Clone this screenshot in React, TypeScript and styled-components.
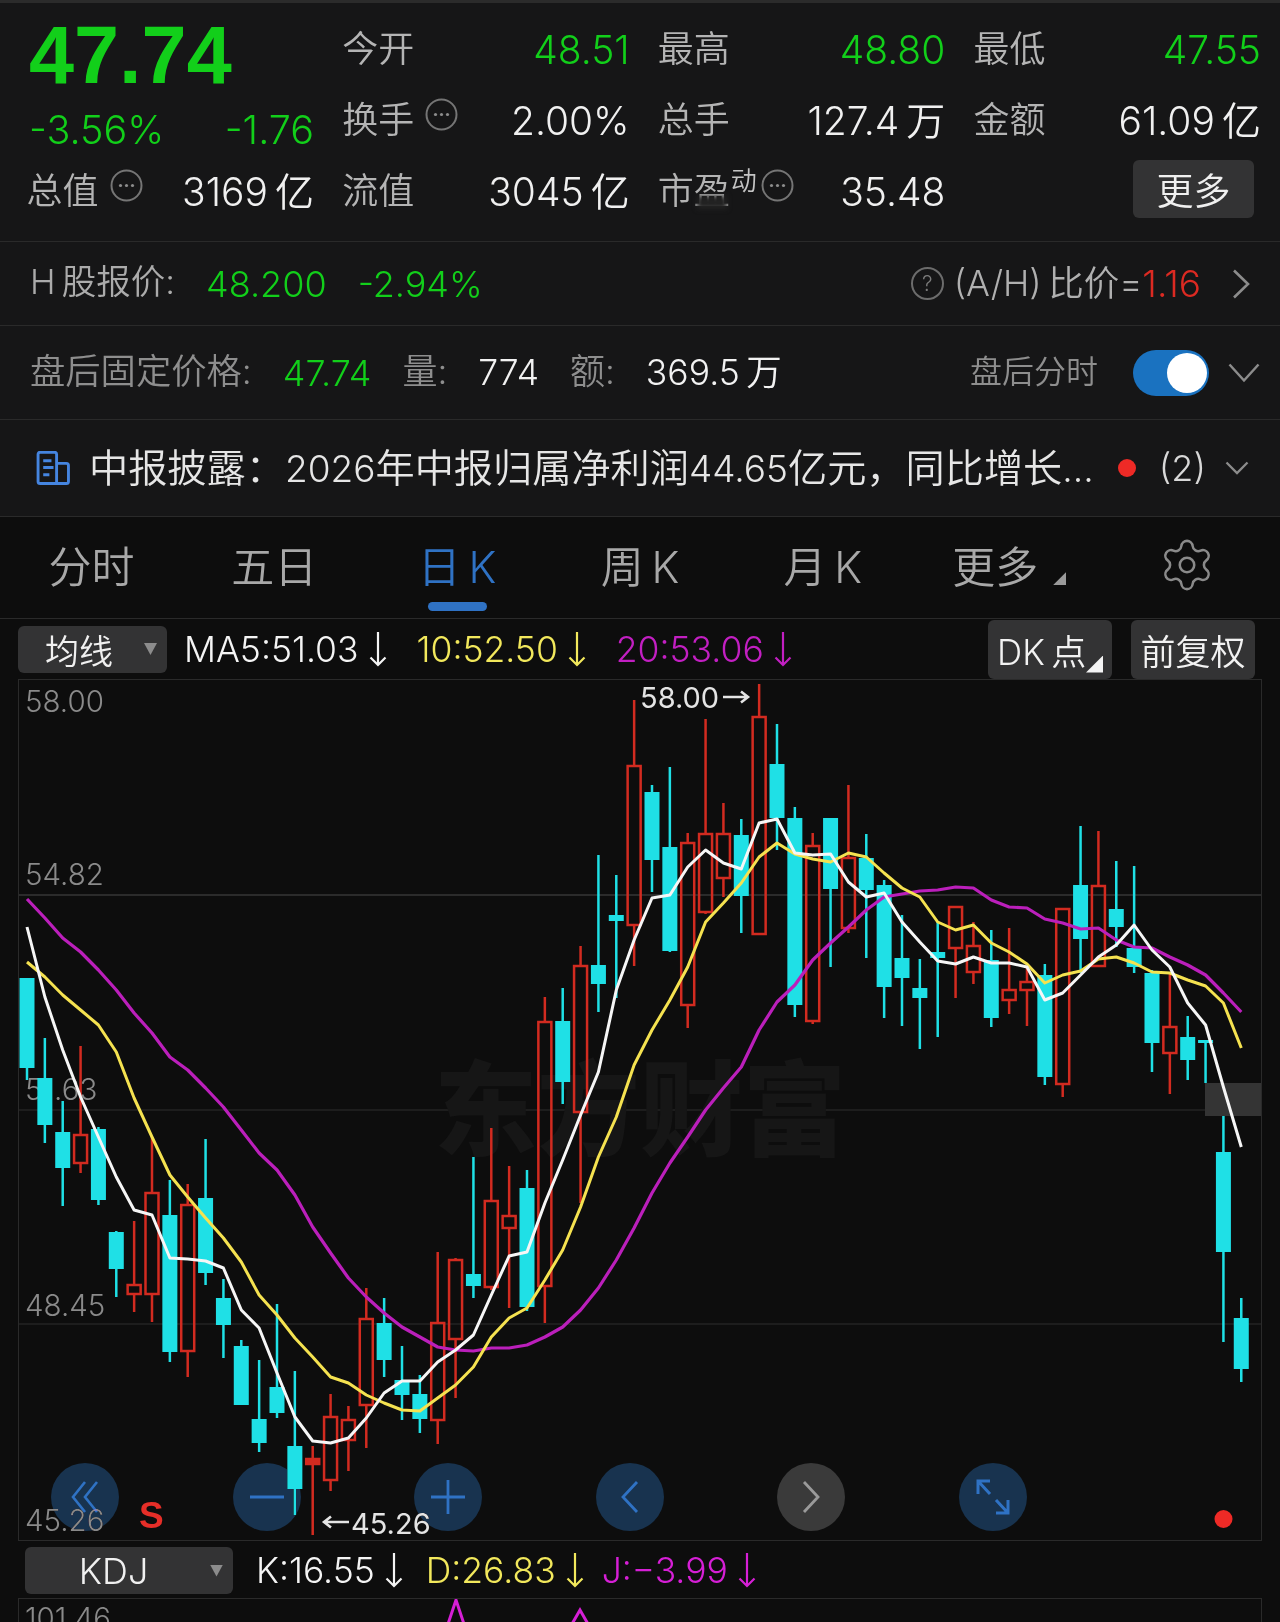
import React from "react";
import styled, { createGlobalStyle } from "styled-components";
import { Settings } from "lucide-react";

const GlobalStyle = createGlobalStyle`
  html, body { margin: 0; padding: 0; background: #0d0d0d; }
  body { font-family: Inter, "Noto Sans CJK SC", sans-serif; font-weight: 350; }
`;

const GREEN = "#12cf1a";
const BLUE = "#2f72c4";

const Page = styled.div`
  width: 1280px;
  height: 1622px;
  overflow: hidden;
  background: #0d0d0d;
  color: #eee;
`;

const Stats = styled.section`
  display: grid;
  grid-template-columns: repeat(4, 285px);
  column-gap: 30.67px;
  grid-auto-rows: 71px;
  padding: 12.5px 0 12.5px 29px;
  border-top: 3px solid #2b2b2b;
  background: #161617;
`;

const Stat = styled.div`
  display: flex;
  align-items: center;
  justify-content: space-between;
  white-space: nowrap;
  position: relative;
`;

const Price = styled.div`
  font-family: "Liberation Sans", sans-serif;
  font-size: 81px;
  font-weight: 700;
  line-height: 71px;
  color: ${GREEN};
  padding-top: 8px;
`;

const ChangeStat = styled(Stat)`
  padding-top: 22px;
`;

const LabelWrap = styled.span`
  display: flex;
  align-items: center;
`;

const StatLabel = styled.span`
  font-size: 36px;
  line-height: 1;
  margin: 0 0 4px -2.5px;
  color: #b4b4b4;
`;

const StatValue = styled.span<{ $c?: string; $size?: number }>`
  font-size: ${(p) => p.$size ?? 39}px;
  line-height: 1;
  margin-bottom: 4px;
  color: ${(p) => p.$c || "#f0f0f0"};
`;

const Sup = styled.sup`
  font-size: 26px;
  color: #c4c4c4;
  line-height: 1;
  margin: -24px 0 0 1px;
  vertical-align: baseline;
`;

const Smudge = styled.span`
  position: absolute;
  left: 37px;
  top: 38px;
  width: 30px;
  height: 13px;
  background: #222;
  filter: blur(2.5px);
`;

const InfoIconSvg = styled.svg`
  width: 33px;
  height: 33px;
  margin: -15px 0 0 ${(p: { $ml?: number }) => p.$ml ?? 11}px;
  flex: none;
`;

const InfoDots = ({ ml }: { ml?: number }) => (
  <InfoIconSvg $ml={ml} viewBox="0 0 33 33">
    <circle cx="16.5" cy="16.5" r="15" fill="none" stroke="#757575" strokeWidth="2" />
    <circle cx="10.5" cy="16.5" r="1.6" fill="#8c8c8c" />
    <circle cx="16.5" cy="16.5" r="1.6" fill="#8c8c8c" />
    <circle cx="22.5" cy="16.5" r="1.6" fill="#8c8c8c" />
  </InfoIconSvg>
);

const MoreButton = styled.button`
  width: 121px;
  height: 58px;
  margin: 0 7px 9px 0;
  border: 0;
  border-radius: 6px;
  background: #333334;
  color: #f0f0f0;
  font: inherit;
  font-size: 37px;
  line-height: 1;
  padding: 5px 0 0;
`;

const Row = styled.div<{ $h: number; $gap?: number; $pl?: number }>`
  height: ${(p) => p.$h}px;
  box-sizing: border-box;
  display: flex;
  align-items: center;
  gap: ${(p) => p.$gap ?? 33}px;
  padding: 0 20px 0 ${(p) => p.$pl ?? 32}px;
  border-top: 1px solid #2a2a2a;
  background: #161617;
  white-space: nowrap;
`;

const Muted = styled.span<{ $size: number; $c?: string }>`
  font-size: ${(p) => p.$size}px;
  line-height: 1;
  margin-bottom: 2px;
  color: ${(p) => p.$c || "#8e8e8e"};
`;

const Num = styled.span<{ $size?: number; $c?: string }>`
  font-size: ${(p) => p.$size ?? 36}px;
  line-height: 1;
  color: ${(p) => p.$c || "#f2f2f2"};
`;

const RightGroup = styled.div<{ $gap: number }>`
  margin-left: auto;
  display: flex;
  align-items: center;
  gap: ${(p) => p.$gap}px;
`;

const Question = styled.span`
  width: 33px;
  height: 33px;
  box-sizing: border-box;
  border: 2px solid #6c6c6c;
  border-radius: 50%;
  display: inline-flex;
  align-items: center;
  justify-content: center;
  font-size: 21px;
  color: #7c7c7c;
`;

const Ratio = styled.span`
  font-size: 35.5px;
  line-height: 1;
  color: #b0b0b0;
  display: inline-flex;
  align-items: center;
`;

const LineIcon = styled.svg<{ $w: number; $h: number; $c?: string; $sw?: number }>`
  width: ${(p) => p.$w}px;
  height: ${(p) => p.$h}px;
  flex: none;
  fill: none;
  stroke: ${(p) => p.$c || "#8c8c8c"};
  stroke-width: ${(p) => p.$sw ?? 2.5};
`;

const RatioChevron = styled(LineIcon)`
  margin: 0 10px 0 21px;
`;

const Toggle = styled.div`
  width: 76px;
  height: 46px;
  box-sizing: border-box;
  padding: 3px 2px;
  border-radius: 23px;
  background: #1a72c0;
  display: flex;
  justify-content: flex-end;
`;

const Thumb = styled.span`
  width: 40px;
  height: 40px;
  border-radius: 50%;
  background: #fff;
`;

const NewsRow = styled(Row)`
  gap: 0;
  padding: 0 31px 0 36px;
`;

const NewsText = styled.span`
  margin-left: 19px;
  font-size: 39.2px;
  line-height: 1;
  color: #e6e6e6;
`;

const NewsNum = styled.span`
  font-size: 37px;
`;

const Dot = styled.span`
  width: 18px;
  height: 18px;
  border-radius: 50%;
  background: #ee2a26;
  display: block;
`;

const Count = styled.span`
  font-size: 36px;
  line-height: 1;
  color: #d8d8d8;
  margin: 0 19px 0 23px;
`;

const Tabs = styled.nav`
  height: 103px;
  box-sizing: border-box;
  display: grid;
  grid-template-columns: repeat(7, 1fr);
  align-items: center;
  border-top: 1px solid #2a2a2a;
  border-bottom: 1px solid #2a2a2a;
  background: #0d0d0d;
`;

const Tab = styled.div<{ $active?: boolean }>`
  position: relative;
  height: 100%;
  box-sizing: border-box;
  padding-bottom: 8px;
  display: flex;
  align-items: center;
  justify-content: center;
  font-size: 43px;
  color: ${(p) => (p.$active ? BLUE : "#a8a8a8")};
  ${(p) =>
    p.$active &&
    `&::after {
      content: "";
      position: absolute;
      left: 62px;
      right: 62px;
      bottom: 7px;
      height: 9px;
      border-radius: 5px;
      background: ${BLUE};
    }`}
`;

const Corner = styled.span<{ $s: number; $c: string }>`
  display: inline-block;
  width: ${(p) => p.$s}px;
  height: ${(p) => p.$s}px;
  background: ${(p) => p.$c};
  clip-path: polygon(100% 0, 100% 100%, 0 100%);
`;

const MoreTab = styled(Tab)`
  padding-left: 7px;
`;

const MoreCorner = styled(Corner)`
  margin: 30px 0 0 15px;
`;

const GearTab = styled(Tab)`
  padding: 0 4px 6px 0;
`;

const IndicatorBar = styled.div<{ $h: number; $pt?: number }>`
  height: ${(p) => p.$h}px;
  box-sizing: border-box;
  display: flex;
  align-items: center;
  padding: ${(p) => p.$pt ?? 0}px 25px 0 18px;
  background: #0d0d0d;
  white-space: nowrap;
`;

const Select = styled.div<{ $w: number; $h: number; $ml?: number }>`
  width: ${(p) => p.$w}px;
  height: ${(p) => p.$h}px;
  margin-left: ${(p) => p.$ml ?? 0}px;
  box-sizing: border-box;
  background: #333334;
  border-radius: 6px;
  display: flex;
  align-items: center;
  color: #f0f0f0;
  flex: none;
`;

const SelectText = styled.span<{ $w: number; $size: number }>`
  width: ${(p) => p.$w}px;
  text-align: center;
  font-size: ${(p) => p.$size}px;
`;

const SelectCaret = styled.span<{ $ml: number }>`
  width: 13px;
  height: 12px;
  background: #8c8c8c;
  clip-path: polygon(0 0, 100% 0, 50% 100%);
  margin-left: ${(p) => p.$ml}px;
`;

const MaValue = styled.span<{ $c: string; $ml?: number; $mr?: number }>`
  display: inline-flex;
  align-items: center;
  gap: 10px;
  margin: 0 ${(p) => p.$mr ?? 0}px 0 ${(p) => p.$ml ?? 0}px;
  font-size: 35.5px;
  color: ${(p) => p.$c};
`;

const TopButton = styled.div<{ $first?: boolean }>`
  position: relative;
  width: 124px;
  height: 59px;
  margin-left: ${(p) => (p.$first ? "auto" : "19px")};
  background: #333334;
  border-radius: 6px;
  display: flex;
  align-items: center;
  justify-content: ${(p) => (p.$first ? "flex-start" : "center")};
  font-size: 35px;
  color: #f2f2f2;
  padding-left: ${(p) => (p.$first ? "9px" : "0")};
  box-sizing: border-box;
`;

const DkCorner = styled(Corner)`
  position: absolute;
  right: 9px;
  bottom: 6px;
`;

const ChartFrame = styled.div<{ $h: number }>`
  position: relative;
  width: 1242px;
  height: ${(p) => p.$h}px;
  margin-left: 18px;
  border: 1px solid #2a2a2a;
  background: #0d0d0d;
`;

const Svg = styled.svg`
  display: block;
  width: 1242px;
  height: 100%;
`;

const AxisLabel = styled.text`
  font-size: 29.5px;
  font-weight: 300;
  fill: #8a8a8a;
`;

const Annotation = styled.text`
  font-size: 29px;
  font-weight: 400;
  fill: #e4e4e4;
`;

const SignalS = styled.text`
  font-family: "Liberation Sans", sans-serif;
  font-size: 37px;
  font-weight: 700;
  fill: #e62e28;
`;

const Watermark = styled.text`
  font-size: 103px;
  font-weight: 900;
  letter-spacing: 0;
  fill: #161616;
`;

const Controls = styled.div`
  position: absolute;
  left: 32px;
  top: 783px;
  display: flex;
  gap: 113.5px;
  mix-blend-mode: lighten;
`;

const RoundButton = styled.div<{ $grey?: boolean }>`
  width: 68px;
  height: 68px;
  border-radius: 50%;
  background: ${(p) => (p.$grey ? "#3a3a3a" : "#18334f")};
  display: flex;
  align-items: center;
  justify-content: center;
`;

/* high, bodyTop, bodyBottom, low, kind */
type C = [number, number, number, number, "c" | "r" | "f"];
const candles: C[] = [
  [978, 978, 1068, 1080, "c"], [1038, 1078, 1125, 1143, "c"], [1101, 1132, 1168, 1206, "c"], [1046, 1135, 1163, 1173, "r"],
  [1127, 1129, 1200, 1205, "c"], [1231, 1232, 1269, 1297, "c"], [1221, 1285, 1294, 1312, "r"], [1137, 1193, 1294, 1322, "r"],
  [1180, 1215, 1352, 1362, "c"], [1184, 1205, 1351, 1377, "r"], [1139, 1198, 1273, 1285, "c"], [1279, 1298, 1325, 1358, "c"],
  [1340, 1346, 1405, 1405, "c"], [1360, 1419, 1443, 1452, "c"], [1304, 1387, 1413, 1418, "c"], [1371, 1446, 1489, 1515, "c"],
  [1446, 1459, 1464, 1535, "f"], [1394, 1417, 1480, 1491, "r"], [1406, 1420, 1440, 1471, "r"], [1288, 1319, 1405, 1448, "r"],
  [1298, 1323, 1360, 1377, "c"], [1346, 1380, 1395, 1420, "c"], [1375, 1394, 1419, 1433, "c"], [1252, 1323, 1420, 1444, "r"],
  [1258, 1260, 1339, 1398, "r"], [1157, 1274, 1286, 1298, "c"], [1128, 1201, 1287, 1290, "r"], [1166, 1216, 1228, 1308, "r"],
  [1170, 1188, 1307, 1311, "c"], [997, 1022, 1286, 1323, "r"], [988, 1021, 1082, 1104, "c"], [946, 966, 1112, 1203, "r"],
  [855, 965, 984, 1012, "c"], [875, 915, 921, 998, "c"], [700, 766, 925, 966, "r"], [785, 792, 860, 892, "c"],
  [767, 847, 951, 952, "c"], [833, 843, 1005, 1028, "r"], [719, 834, 912, 914, "r"], [803, 834, 878, 897, "r"],
  [819, 835, 896, 933, "c"], [684, 717, 934, 935, "r"], [724, 764, 818, 850, "c"], [807, 818, 1005, 1017, "c"],
  [833, 846, 1021, 1024, "r"], [818, 818, 889, 967, "c"], [785, 858, 928, 933, "r"], [834, 858, 890, 958, "c"],
  [880, 885, 987, 1018, "c"], [915, 958, 978, 1026, "c"], [959, 988, 998, 1049, "c"], [922, 952, 958, 1037, "c"],
  [907, 907, 948, 998, "r"], [922, 946, 972, 984, "r"], [930, 960, 1018, 1027, "c"], [928, 990, 1000, 1014, "r"],
  [967, 982, 990, 1026, "r"], [964, 975, 1077, 1085, "c"], [909, 909, 1084, 1097, "r"], [826, 885, 939, 973, "c"],
  [831, 886, 966, 967, "r"], [861, 909, 927, 947, "c"], [866, 948, 967, 973, "c"], [970, 973, 1043, 1072, "c"],
  [973, 1027, 1053, 1094, "r"], [1016, 1037, 1060, 1080, "c"], [1040, 1040, 1043, 1083, "c"], [1090, 1152, 1252, 1342, "c"],
  [1298, 1318, 1369, 1382, "c"],
];

const xOf = (i: number) => 27 + 17.857 * i;

const ma5 = [927, 997, 1050, 1097, 1137, 1177, 1210, 1215, 1258, 1259, 1261, 1268, 1310, 1328, 1373, 1417, 1441, 1443, 1438, 1418, 1393, 1381, 1381, 1362, 1350, 1335, 1295, 1256, 1252, 1203, 1160, 1115, 1072, 990, 940, 898, 895, 867, 850, 863, 869, 823, 819, 853, 855, 854, 882, 897, 893, 922, 942, 961, 964, 957, 963, 963, 967, 1000, 993, 975, 957, 945, 925, 950, 967, 1003, 1025, 1087, 1147];
const ma10 = [962, 977, 995, 1010, 1025, 1052, 1098, 1137, 1175, 1197, 1218, 1238, 1262, 1295, 1315, 1338, 1357, 1377, 1383, 1395, 1403, 1410, 1411, 1398, 1385, 1367, 1337, 1318, 1308, 1280, 1250, 1207, 1157, 1117, 1065, 1030, 1000, 967, 922, 903, 883, 857, 843, 854, 859, 862, 853, 857, 873, 888, 897, 922, 930, 925, 943, 952, 964, 983, 975, 971, 959, 957, 963, 972, 973, 980, 986, 1003, 1048];
const ma20 = [899, 918, 938, 952, 970, 990, 1013, 1033, 1057, 1070, 1088, 1107, 1130, 1153, 1170, 1195, 1227, 1253, 1278, 1297, 1313, 1327, 1337, 1347, 1350, 1351, 1348, 1348, 1345, 1337, 1327, 1310, 1288, 1260, 1228, 1193, 1163, 1137, 1110, 1088, 1067, 1030, 1002, 985, 960, 943, 927, 910, 897, 894, 891, 890, 887, 888, 900, 907, 908, 919, 923, 929, 928, 940, 947, 948, 957, 965, 975, 993, 1012];

const toPoints = (ys: number[]) => ys.map((y, i) => `${xOf(i).toFixed(1)},${y}`).join(" ");

const CYAN = "#1fe0e6";
const RED = "#d22b20";

const Candle = ({ d, i }: { d: C; i: number }) => {
  const [h, t, b, l, kind] = d;
  const x = xOf(i);
  if (kind === "c") {
    return (
      <g>
        <line x1={x} x2={x} y1={h} y2={l} stroke={CYAN} strokeWidth="2.5" />
        <rect x={x - 7.5} y={t} width="15" height={b - t} fill={CYAN} />
      </g>
    );
  }
  return (
    <g>
      <line x1={x} x2={x} y1={h} y2={t} stroke={RED} strokeWidth="2.5" />
      <line x1={x} x2={x} y1={b} y2={l} stroke={RED} strokeWidth="2.5" />
      <rect
        x={x - 6.5}
        y={t}
        width="13"
        height={b - t}
        fill={kind === "f" ? RED : "none"}
        stroke={RED}
        strokeWidth="2.5"
      />
    </g>
  );
};

const DownArrow = ({ c }: { c: string }) => (
  <LineIcon $w={18} $h={35} $c={c} $sw={2.2} viewBox="0 0 18 35">
    <path d="M9 0V33M1.5 25.5L9 33L16.5 25.5" />
  </LineIcon>
);

const App = () => (
  <Page>
    <GlobalStyle />
    <Stats>
      <Stat><Price>47.74</Price></Stat>
      <Stat><StatLabel>今开</StatLabel><StatValue $c={GREEN}>48.51</StatValue></Stat>
      <Stat><StatLabel>最高</StatLabel><StatValue $c={GREEN}>48.80</StatValue></Stat>
      <Stat><StatLabel>最低</StatLabel><StatValue $c={GREEN}>47.55</StatValue></Stat>

      <ChangeStat><StatValue $c={GREEN} $size={39.5}>-3.56%</StatValue><StatValue $c={GREEN} $size={39.5}>-1.76</StatValue></ChangeStat>
      <Stat><LabelWrap><StatLabel>换手</StatLabel><InfoDots /></LabelWrap><StatValue>2.00%</StatValue></Stat>
      <Stat><StatLabel>总手</StatLabel><StatValue>127.4&#8201;万</StatValue></Stat>
      <Stat><StatLabel>金额</StatLabel><StatValue>61.09&#8201;亿</StatValue></Stat>

      <Stat><LabelWrap><StatLabel>总值</StatLabel><InfoDots /></LabelWrap><StatValue>3169&#8201;亿</StatValue></Stat>
      <Stat><StatLabel>流值</StatLabel><StatValue>3045&#8201;亿</StatValue></Stat>
      <Stat>
        <LabelWrap><StatLabel>市盈</StatLabel><Sup>动</Sup><InfoDots ml={4} /><Smudge /></LabelWrap>
        <StatValue>35.48</StatValue>
      </Stat>
      <Stat><span /><MoreButton>更多</MoreButton></Stat>
    </Stats>

    <Row $h={84} $pl={30} $gap={31}>
      <Muted $size={34.5} $c="#ababab">H&#8201;股报价:</Muted>
      <Num $c={GREEN}>48.200</Num>
      <Num $c={GREEN}>-2.94%</Num>
      <RightGroup $gap={10}>
        <Question>?</Question>
        <Ratio>(A/H)&#8201;比价=<Num $size={37} $c="#dc2a22">1.16</Num></Ratio>
        <RatioChevron $w={18} $h={30} viewBox="0 0 18 30" $sw={2.6}><path d="M2 1.5L16 15L2 28.5" /></RatioChevron>
      </RightGroup>
    </Row>

    <Row $h={94} $gap={31} $pl={30}>
      <Muted $size={35.3}>盘后固定价格:</Muted>
      <Num $c={GREEN}>47.74</Num>
      <Muted $size={35}>量:</Muted>
      <Num $size={35.5}>774</Num>
      <Muted $size={35}>额:</Muted>
      <Num $size={35.5}>369.5&#8201;万</Num>
      <RightGroup $gap={35}>
        <Muted $size={32}>盘后分时</Muted>
        <RightGroup $gap={19}>
          <Toggle><Thumb /></Toggle>
          <LineIcon $w={32} $h={20} viewBox="0 0 32 20"><path d="M1.5 1.5L16 17.5L30.5 1.5" /></LineIcon>
        </RightGroup>
      </RightGroup>
    </Row>

    <NewsRow $h={97}>
      <LineIcon $w={34} $h={34} $c="#4585e0" $sw={2.8} viewBox="0 0 33 33">
        <path d="M2 3.2a2 2 0 0 1 2-2h14a2 2 0 0 1 2 2V31.5H4a2 2 0 0 1-2-2z" />
        <path d="M20 12h9.5a2 2 0 0 1 2 2v15.5a2 2 0 0 1-2 2H20" />
        <path d="M7 9.5h8M7 16h10M7 23h6" />
      </LineIcon>
      <NewsText>中报披露&#xFF1A;<NewsNum>2026</NewsNum>年中报归属净利润<NewsNum>44.65</NewsNum>亿元&#xFF0C;同比增长<NewsNum>...</NewsNum></NewsText>
      <RightGroup $gap={0}>
        <Dot />
        <Count>(2)</Count>
        <LineIcon $w={24} $h={14} viewBox="0 0 24 14" $sw={2.3}><path d="M1.5 1.5L12 12L22.5 1.5" /></LineIcon>
      </RightGroup>
    </NewsRow>

    <Tabs>
      <Tab>分时</Tab>
      <Tab>五日</Tab>
      <Tab $active>日&#8201;K</Tab>
      <Tab>周&#8201;K</Tab>
      <Tab>月&#8201;K</Tab>
      <MoreTab>更多<MoreCorner $s={13} $c="#9a9a9a" /></MoreTab>
      <GearTab><Settings size={58} strokeWidth={1.05} color="#8a8a8a" /></GearTab>
    </Tabs>

    <IndicatorBar $h={60}>
      <Select $w={149} $h={47}>
        <SelectText $w={122} $size={34}>均线</SelectText>
        <SelectCaret $ml={4} />
      </Select>
      <MaValue $c="#f4f4f4" $ml={17} $mr={30}>MA5:51.03<DownArrow c="#f4f4f4" /></MaValue>
      <MaValue $c="#f2e85c" $mr={30}>10:52.50<DownArrow c="#f2e85c" /></MaValue>
      <MaValue $c="#c21fc2">20:53.06<DownArrow c="#c21fc2" /></MaValue>
      <TopButton $first>DK&#8201;点<DkCorner $s={17} $c="#f4f4f4" /></TopButton>
      <TopButton>前复权</TopButton>
    </IndicatorBar>

    <ChartFrame $h={860}>
      <Svg viewBox="19 680 1242 860">
        <line x1="19" x2="1261" y1="895" y2="895" stroke="#2b2b2b" strokeWidth="2" />
        <line x1="19" x2="1261" y1="1110" y2="1110" stroke="#232323" strokeWidth="1.5" />
        <line x1="19" x2="1261" y1="1324" y2="1324" stroke="#232323" strokeWidth="1.5" />
        <Watermark x="434" y="1148">东方财富</Watermark>
        <AxisLabel x="25" y="712">58.00</AxisLabel>
        <AxisLabel x="25" y="885">54.82</AxisLabel>
        <AxisLabel x="25" y="1100">51.63</AxisLabel>
        <AxisLabel x="25" y="1316">48.45</AxisLabel>
        <AxisLabel x="25" y="1531">45.26</AxisLabel>
        {candles.map((d, i) => <Candle key={i} d={d} i={i} />)}
        <rect x="1205" y="1083" width="56" height="33" fill="#343434" />
        <polyline points={toPoints(ma20)} fill="none" stroke="#bb1fbb" strokeWidth="3.2" strokeLinejoin="round" />
        <polyline points={toPoints(ma10)} fill="none" stroke="#f5e250" strokeWidth="3" strokeLinejoin="round" />
        <polyline points={toPoints(ma5)} fill="none" stroke="#f6f6f6" strokeWidth="3" strokeLinejoin="round" />
        <Annotation x="640" y="708">58.00</Annotation>
        <path d="M723 697H747M741 691.5L748 697L741 702.5" fill="none" stroke="#e4e4e4" strokeWidth="2.6" />
        <Annotation x="351" y="1534">45.26</Annotation>
        <path d="M349 1522H324M331 1516.5L324 1522L331 1527.5" fill="none" stroke="#e4e4e4" strokeWidth="2.6" />
        <SignalS x="139" y="1528">S</SignalS>
        <circle cx="1223.5" cy="1519" r="9" fill="#ee2a26" />
      </Svg>
      <Controls>
        <RoundButton>
          <LineIcon $w={28} $h={34} $c={BLUE} $sw={2.6} viewBox="0 0 28 34"><path d="M14 2L2 17L14 32M26 2L14 17L26 32" /></LineIcon>
        </RoundButton>
        <RoundButton>
          <LineIcon $w={34} $h={4} $c={BLUE} $sw={2.8} viewBox="0 0 34 4"><path d="M0 2H34" /></LineIcon>
        </RoundButton>
        <RoundButton>
          <LineIcon $w={34} $h={34} $c={BLUE} $sw={2.8} viewBox="0 0 34 34"><path d="M0 17H34M17 0V34" /></LineIcon>
        </RoundButton>
        <RoundButton>
          <LineIcon $w={18} $h={34} $c={BLUE} $sw={2.8} viewBox="0 0 18 34"><path d="M16 2L2 17L16 32" /></LineIcon>
        </RoundButton>
        <RoundButton $grey>
          <LineIcon $w={18} $h={34} $c="#9a9a9a" $sw={2.8} viewBox="0 0 18 34"><path d="M2 2L16 17L2 32" /></LineIcon>
        </RoundButton>
        <RoundButton>
          <LineIcon $w={34} $h={36} $c={BLUE} $sw={3} viewBox="0 0 34 36"><path d="M2 15V2H14M2 2L14 15M32 21V34H20M32 34L20 21" /></LineIcon>
        </RoundButton>
      </Controls>
    </ChartFrame>

    <IndicatorBar $h={57} $pt={2}>
      <Select $w={208} $h={47} $ml={7}>
        <SelectText $w={177} $size={36}>KDJ</SelectText>
        <SelectCaret $ml={8} />
      </Select>
      <MaValue $c="#f4f4f4" $ml={23} $mr={23}>K:16.55<DownArrow c="#f4f4f4" /></MaValue>
      <MaValue $c="#f2e85c" $mr={18}>D:26.83<DownArrow c="#f2e85c" /></MaValue>
      <MaValue $c="#d61fd6">J:−3.99<DownArrow c="#d61fd6" /></MaValue>
    </IndicatorBar>

    <ChartFrame $h={40}>
      <Svg viewBox="19 1600 1242 40">
        <AxisLabel x="25" y="1630">101.46</AxisLabel>
        <path d="M448 1625L456 1601L464 1625M572 1625L580 1611L588 1625" fill="none" stroke="#d61fd6" strokeWidth="3" />
      </Svg>
    </ChartFrame>
  </Page>
);

export default App;
